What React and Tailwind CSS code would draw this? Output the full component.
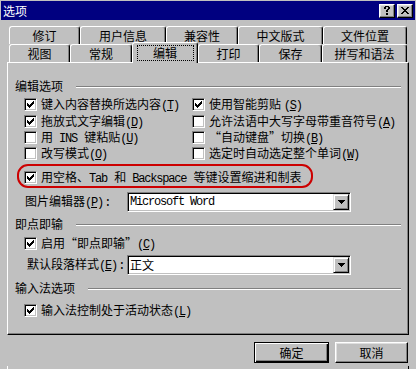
import React from "react";

const mono = "font-['Liberation_Mono','DejaVu_Sans_Mono',monospace] tracking-[-1.2px] pr-[1.2px]";

function Mn({ c }) {
  return (
    <span className={mono}>
      (<span className="underline underline-offset-[1px]">{c}</span>)
    </span>
  );
}

function M({ children }) {
  return <span className={mono}>{children}</span>;
}

function QL() {
  return <span className="inline-block w-[12px] text-right">“</span>;
}
function QR() {
  return <span className="inline-block w-[12px] text-left">”</span>;
}

function CheckMark() {
  return (
    <svg width="7" height="7" viewBox="0 0 7 7" shapeRendering="crispEdges">
      <path
        d="M0 2h1v3H0z M1 3h1v3H1z M2 4h1v3H2z M3 3h1v3H3z M4 2h1v3H4z M5 1h1v3H5z M6 0h1v3H6z"
        fill="#000"
      />
    </svg>
  );
}

function Box({ checked }) {
  return (
    <span className="flex items-center justify-center w-[13px] h-[13px] shrink-0 bg-white border border-t-[#808080] border-l-[#808080] border-r-white border-b-white shadow-[inset_1px_1px_0_#000,inset_-1px_-1px_0_#c0c0c0]">
      {checked && <CheckMark />}
    </span>
  );
}

function Check({ checked, children }) {
  return (
    <div className="flex items-center h-[13px]">
      <Box checked={checked} />
      <span className="ml-[4px] text-[12px] leading-[12px] whitespace-nowrap">{children}</span>
    </div>
  );
}

function Group({ label }) {
  return (
    <div className="flex items-start">
      <span className="text-[12px] leading-[12px] whitespace-nowrap">{label}</span>
      <div className="flex-1 ml-[13px] mt-[6px] h-[2px] border-t border-t-[#808080] border-b border-b-white" />
    </div>
  );
}

function Arrow() {
  return (
    <svg width="7" height="4" viewBox="0 0 7 4" shapeRendering="crispEdges">
      <path d="M0 0h7v1H0z M1 1h5v1H1z M2 2h3v1H2z M3 3h1v1H3z" fill="#000" />
    </svg>
  );
}

function Combo({ children }) {
  return (
    <div className="flex w-[224px] h-[20px] bg-white border border-t-[#808080] border-l-[#808080] border-r-white border-b-white shadow-[inset_1px_1px_0_#000,inset_-1px_-1px_0_#c0c0c0] p-[1px]">
      <div className="flex-1 flex items-center pl-[1px] text-[12px] leading-[12px] whitespace-nowrap">
        {children}
      </div>
      <div className="w-[16px] h-[16px] flex items-center justify-center bg-[#c0c0c0] border border-t-[#dfdfdf] border-l-[#dfdfdf] border-r-black border-b-black shadow-[inset_1px_1px_0_#fff,inset_-1px_-1px_0_#808080]">
        <Arrow />
      </div>
    </div>
  );
}

function Tab({ w, children }) {
  return (
    <div
      className={
        "h-full flex items-center justify-center bg-[#c0c0c0] border-t border-l border-white border-r border-r-black rounded-t-[3px] shadow-[inset_-1px_0_0_#808080] text-[12px] leading-[12px] whitespace-nowrap " +
        w
      }
    >
      {children}
    </div>
  );
}

function TitleBtn({ children }) {
  return (
    <div className="w-[16px] h-[14px] flex items-center justify-center bg-[#c0c0c0] border border-t-white border-l-white border-r-black border-b-black shadow-[inset_-1px_-1px_0_#808080,inset_1px_1px_0_#dfdfdf]">
      {children}
    </div>
  );
}

export default function App() {
  return (
    <div className="w-[416px] h-[369px] bg-[#c0c0c0] overflow-hidden text-black font-['Noto_Sans_CJK_SC','Noto_Sans_CJK_JP',sans-serif]">
      {/* Title bar */}
      <div className="mt-[1px] ml-[1px] w-[414px] h-[19px] bg-[#000080] flex items-center pl-[2px] pr-[2px]">
        <span className="text-white text-[12px] leading-[12px]">选项</span>
        <div className="ml-auto flex gap-[2px]">
          <TitleBtn>
            <svg width="6" height="9" viewBox="0 0 6 9" shapeRendering="crispEdges">
              <path d="M1 0h4v1H1z M0 1h2v2H0z M4 1h2v2H4z M3 3h2v1H3z M2 4h2v2H2z M2 7h2v2H2z" fill="#000" />
            </svg>
          </TitleBtn>
          <TitleBtn>
            <svg width="8" height="7" viewBox="0 0 8 7" shapeRendering="crispEdges">
              <path d="M0 0h2v1H0z M6 0h2v1H6z M1 1h2v1H1z M5 1h2v1H5z M2 2h4v1H2z M3 3h2v1H3z M2 4h4v1H2z M1 5h2v1H1z M5 5h2v1H5z M0 6h2v1H0z M6 6h2v1H6z" fill="#000" />
            </svg>
          </TitleBtn>
        </div>
      </div>

      {/* Tabs row 1 */}
      <div className="mt-[6px] ml-[9px] flex h-[18px]">
        <Tab w="w-[71px]">修订</Tab>
        <Tab w="w-[86px]">用户信息</Tab>
        <Tab w="w-[72px]">兼容性</Tab>
        <Tab w="w-[85px]">中文版式</Tab>
        <Tab w="w-[84px]">文件位置</Tab>
      </div>
      {/* Tabs row 2 */}
      <div className="ml-[9px] flex h-[18px] items-end">
        <Tab w="w-[61px]">视图</Tab>
        <Tab w="w-[62px]">常规</Tab>
        <div className="relative z-10 w-[66px] h-[21px] -mb-[1px] flex justify-center pt-[2px] bg-[#c0c0c0] border-t border-l border-white border-r border-r-black rounded-t-[3px] shadow-[inset_-1px_0_0_#808080]">
          <span className="w-[57px] h-[16px] flex items-center justify-center border border-dotted border-black text-[12px] leading-[12px]">
            编辑
          </span>
        </div>
        <Tab w="w-[61px]">打印</Tab>
        <Tab w="w-[63px]">保存</Tab>
        <Tab w="w-[85px]">拼写和语法</Tab>
      </div>

      {/* Panel */}
      <div className="ml-[7px] w-[402px] h-[273px] border border-t-white border-l-white border-r-black border-b-black shadow-[inset_-1px_-1px_0_#808080] pl-[7px] pr-[7px]">
        <div className="mt-[17px]">
          <Group label="编辑选项" />
        </div>
        <div className="mt-[6px] ml-[9px] flex flex-col">
          <div className="flex">
            <div className="w-[168px]">
              <Check checked>
                键入内容替换所选内容<Mn c="T" />
              </Check>
            </div>
            <Check checked>
              使用智能剪贴 <Mn c="S" />
            </Check>
          </div>
          <div className="mt-[4px] flex">
            <div className="w-[168px]">
              <Check checked>
                拖放式文字编辑<Mn c="D" />
              </Check>
            </div>
            <Check>
              允许法语中大写字母带重音符号<Mn c="A" />
            </Check>
          </div>
          <div className="mt-[3px] flex">
            <div className="w-[168px]">
              <Check>
                用<M> INS </M>键粘贴<Mn c="U" />
              </Check>
            </div>
            <Check>
              <QL />自动键盘<QR />切换<Mn c="B" />
            </Check>
          </div>
          <div className="mt-[3px] flex">
            <div className="w-[168px]">
              <Check>
                改写模式<Mn c="O" />
              </Check>
            </div>
            <Check>
              选定时自动选定整个单词<Mn c="W" />
            </Check>
          </div>

          <div className="relative mt-[11px]">
            <Check checked>
              用空格、<M>Tab </M>和<M> Backspace </M>等键设置缩进和制表
            </Check>
            <div className="absolute -left-[7px] -top-[7px] w-[296px] h-[24px] border-2 border-[#cc0000] rounded-[11px] pointer-events-none" />
          </div>
        </div>

        <div className="mt-[8px] flex items-center">
          <span className="ml-[10px] w-[102px] text-[12px] leading-[12px] whitespace-nowrap">
            图片编辑器<Mn c="P" />
            <M>:</M>
          </span>
          <Combo>
            <M>Microsoft Word</M>
          </Combo>
        </div>

        <div className="mt-[6px]">
          <Group label="即点即输" />
        </div>
        <div className="mt-[7px] ml-[9px]">
          <Check checked>
            启用<QL />即点即输<QR /><Mn c="C" />
          </Check>
        </div>
        <div className="mt-[5px] flex items-center">
          <span className="ml-[12px] w-[100px] text-[12px] leading-[12px] whitespace-nowrap">
            默认段落样式<Mn c="E" />
            <M>:</M>
          </span>
          <Combo>正文</Combo>
        </div>

        <div className="mt-[7px]">
          <Group label="输入法选项" />
        </div>
        <div className="mt-[10px] ml-[9px]">
          <Check checked>
            输入法控制处于活动状态<Mn c="L" />
          </Check>
        </div>
      </div>

      {/* Buttons */}
      <div className="mt-[7px] flex justify-end gap-[6px] pr-[8px]">
        <button className="w-[75px] h-[21px] flex items-center justify-center bg-[#c0c0c0] border border-black shadow-[inset_1px_1px_0_#fff,inset_-1px_-1px_0_#000,inset_-2px_-2px_0_#808080] text-[12px] leading-[12px]">
          确定
        </button>
        <button className="w-[73px] h-[21px] flex items-center justify-center bg-[#c0c0c0] border border-t-white border-l-white border-r-black border-b-black shadow-[inset_-1px_-1px_0_#808080,inset_1px_1px_0_#dfdfdf] text-[12px] leading-[12px]">
          取消
        </button>
      </div>
      <div className="mt-[3px] ml-[7px] w-[402px] h-[3px] border-l border-l-white border-r border-r-black" />
    </div>
  );
}
